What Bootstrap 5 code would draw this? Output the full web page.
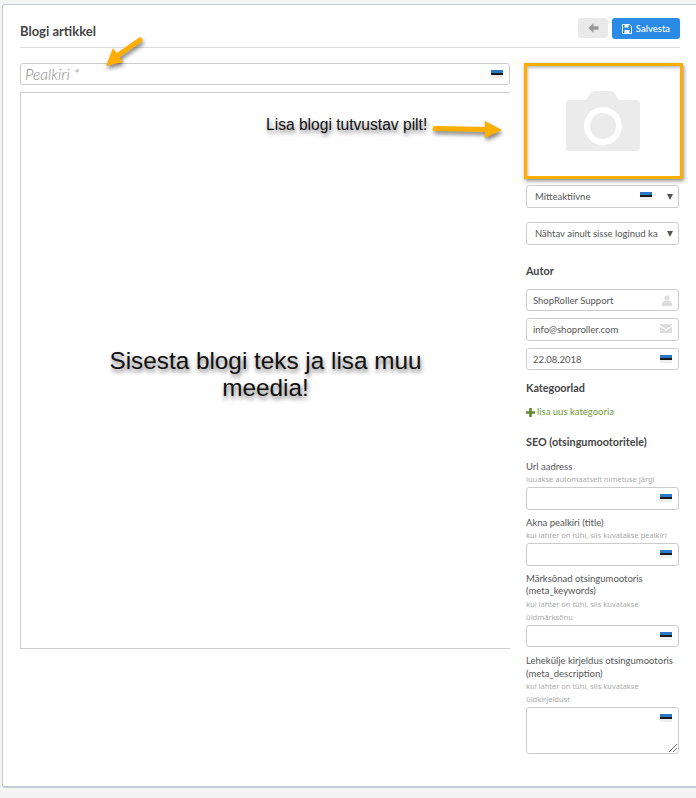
<!DOCTYPE html>
<html lang="et"><head><meta charset="utf-8">
<title>Blogi artikkel</title>
<link href="https://cdn.jsdelivr.net/npm/bootstrap@5.3.0/dist/css/bootstrap.min.css" rel="stylesheet">
<style>
html,body{height:798px;overflow:hidden}
body{background:#f4f4f4;font-family:Lato,sans-serif;font-size:10px;color:#555;padding:4px 0 0 2px}
.sheet{position:relative;background:#fff;height:784px;border:1px solid #c6ccd2;border-right:0;border-bottom-width:2px;border-radius:3px 0 0 3px;padding:13px 16px 0 17px}
.head-bar{height:30px;border-bottom:1px solid #ddd;margin-bottom:15px}
.head-title{font-family:Lato,sans-serif;font-weight:700;font-size:13px;color:#444;margin:6px 0 0}
.btn-back{width:30px;height:20px;background:#e9e9e9;border:0;border-radius:3px;padding:0;display:flex;align-items:center;justify-content:center}
.btn-save{width:68px;height:21px;background:#2a8ae6;border:0;border-radius:3px;padding:1px 0 0;color:#fff;font-size:9.5px;font-family:Lato,sans-serif;font-weight:500;display:flex;align-items:center;justify-content:center;gap:4px}
.main-col{width:490px}
.side-col{width:153px;margin-left:16px}
.field{position:relative;border:1px solid #ccc;border-radius:3px;height:22.5px;display:flex;align-items:center;padding:1px 6px 0;font-size:9.5px;color:#555;background:#fff;white-space:nowrap;overflow:hidden}
.field-title{height:22px;font-size:15.5px;font-style:italic;font-weight:300;font-family:Lato,sans-serif;color:#888;padding:1px 4px 0;margin-bottom:7px}
.editor{height:557px;border:1px solid #ccc;border-right:0;display:flex;align-items:center;justify-content:center;text-align:center;padding:7px 60px 0;font-family:"Liberation Sans",sans-serif;font-size:24.3px;line-height:27px;color:#111;text-shadow:1px 3px 4px rgba(0,0,0,.55)}
.flag{position:absolute;right:6px;top:6px;width:12px;height:8px;background:linear-gradient(#2b78c8 0 38%,#1a1a1a 38% 68%,#eee 68%)}
.photo{position:relative;height:116px;margin-bottom:6px;display:flex;align-items:center;justify-content:center}
.photo-frame{position:absolute;left:-2px;right:-4px;top:0;bottom:0;border:3px solid #ffae00;box-shadow:1px 2px 4px rgba(0,0,0,.45),inset 1px 2px 3px rgba(0,0,0,.25)}
.sel{padding-left:8px;margin-bottom:14.5px}
.flag-sel{right:26px}
.caret{position:absolute;right:5px;top:8px;width:0;height:0;border-left:3px solid transparent;border-right:3px solid transparent;border-top:6px solid #555}
.sec{font-family:Lato,sans-serif;font-weight:700;font-size:10.8px;color:#444;margin:0}
.gap-sm{margin-bottom:7px}
.lbl{font-size:9.5px;line-height:12.5px;color:#555;margin:0}
.hint{font-family:"Noto Sans",sans-serif;font-size:7.5px;line-height:13px;color:#aaa;margin:0 0 1px}
.ico{position:absolute;right:6px;top:5px}
.add-link{color:#6e9b3a;font-size:9.5px;display:flex;align-items:center;gap:2px;margin:10px 0 16px;text-decoration:none}
.note{position:absolute;left:263px;top:110px;font-family:"Liberation Sans",sans-serif;font-size:15.6px;line-height:20px;color:#111;text-shadow:1px 3px 4px rgba(0,0,0,.55);white-space:nowrap}
.arrow{position:absolute;overflow:visible}
.arr-a{left:96px;top:30px}
.arr-b{left:428px;top:112px}
.big-field{height:47px}
.grip{position:absolute;right:1px;bottom:1px}
</style></head>
<body>
<div class="sheet">
  <div class="head-bar d-flex justify-content-between align-items-start">
    <h1 class="head-title">Blogi artikkel</h1>
    <div class="d-flex gap-1">
      <button class="btn-back" type="button" aria-label="Tagasi"><svg width="11" height="10" viewBox="0 0 11 10"><path d="M5.500 0 .5 5l5 5V6.800H10.500V3.200H5.500z" fill="#999"/></svg></button>
      <button class="btn-save" type="button"><svg width="10" height="10" viewBox="0 0 10 10"><path d="M.5.5h7l2 2v7H.5z" fill="none" stroke="#fff"/><path d="M2.500 1h4v2.500h-4zM2.500 6h5v3h-5z" fill="#fff"/></svg>Salvesta</button>
    </div>
  </div>
  <div class="d-flex align-items-start">
    <div class="main-col">
      <div class="field field-title">Pealkiri *<span class="flag"></span></div>
      <div class="editor">Sisesta blogi teks ja lisa muu meedia!</div>
    </div>
    <div class="side-col">
      <div class="photo">
        <svg width="74" height="60" viewBox="0 0 74 60"><path d="M3 9h17l4-6q1.500-3 5-3h15q4 0 5 3l4 6h18q3 0 3 3v45q0 3-3 3H3q-3 0-3-3V12q0-3 3-3z" fill="#ebebeb"/><circle cx="37" cy="35" r="16" fill="none" stroke="#fff" stroke-width="6"/></svg>
        <div class="photo-frame"></div>
      </div>
      <div class="field sel">Mitteaktiivne<span class="flag flag-sel"></span><span class="caret"></span></div>
      <div class="field sel">Nähtav ainult sisse loginud ka<span class="caret"></span></div>
      <h2 class="sec" style="margin-bottom:11px;padding-top:6px">Autor</h2>
      <div class="field gap-sm">ShopRoller Support<svg class="ico" width="10" height="11" viewBox="0 0 10 11"><circle cx="5" cy="3" r="2.600" fill="#ddd"/><path d="M0 11V8.500Q0 6 3 6h4q3 0 3 2.500V11z" fill="#ddd"/></svg></div>
      <div class="field gap-sm">info@shoproller.com<svg class="ico" width="12" height="9" viewBox="0 0 12 9"><path d="M0 0h12v1.500L6 5 0 1.500zM0 3l6 3.500L12 3v6H0z" fill="#ddd"/></svg></div>
      <div class="field" style="margin-bottom:12px">22.08.2018<span class="flag"></span></div>
      <h2 class="sec">Kategoorlad</h2>
      <a class="add-link" href="#"><svg width="9" height="9" viewBox="0 0 9 9"><path d="M3.200 0h2.600v3.200H9v2.600H5.800V9H3.200V5.800H0V3.200h3.200z" fill="#5d8a2c"/></svg>lisa uus kategooria</a>
      <h2 class="sec" style="margin-bottom:12px">SEO (otsingumootoritele)</h2>
      <p class="lbl">Url aadress</p>
      <p class="hint">luuakse automaatselt nimetuse järgi</p>
      <div class="field" style="margin-bottom:7px"><span class="flag"></span></div>
      <p class="lbl">Akna pealkiri (title)</p>
      <p class="hint">kui lahter on tühi, siis kuvatakse pealkiri</p>
      <div class="field" style="margin-bottom:7px"><span class="flag"></span></div>
      <p class="lbl">Märksõnad otsingumootoris (meta_keywords)</p>
      <p class="hint">kui lahter on tühi, siis kuvatakse üldmärksõnu</p>
      <div class="field" style="margin-bottom:8px"><span class="flag"></span></div>
      <p class="lbl">Lehekülje kirjeldus otsingumootoris (meta_description)</p>
      <p class="hint">kui lahter on tühi, siis kuvatakse üldkirjeldust</p>
      <div class="field big-field"><span class="flag"></span><svg class="grip" width="9" height="9" viewBox="0 0 9 9"><path d="M1 9 9 1M5 9l4-4" stroke="#666" fill="none"/></svg></div>
    </div>
  </div>
  <div class="note">Lisa blogi tutvustav pilt!</div>
  <svg class="arrow arr-a" width="50" height="40" viewBox="0 0 50 40"><g style="filter:drop-shadow(1px 3px 2px rgba(0,0,0,.5))"><path d="M41 5 18 21" stroke="#ffae00" stroke-width="5" stroke-linecap="round"/><path d="M7 31 14 13 24 27z" fill="#ffae00"/></g></svg>
  <svg class="arrow arr-b" width="76" height="30" viewBox="0 0 76 30"><g style="filter:drop-shadow(1px 3px 2px rgba(0,0,0,.5))"><path d="M4 11.500 56 12.500" stroke="#ffae00" stroke-width="5" stroke-linecap="round"/><path d="M54 4 71 13 54 21z" fill="#ffae00"/></g></svg>
</div>
<script src="https://cdn.jsdelivr.net/npm/bootstrap@5.3.0/dist/js/bootstrap.bundle.min.js"></script>
</body></html>
